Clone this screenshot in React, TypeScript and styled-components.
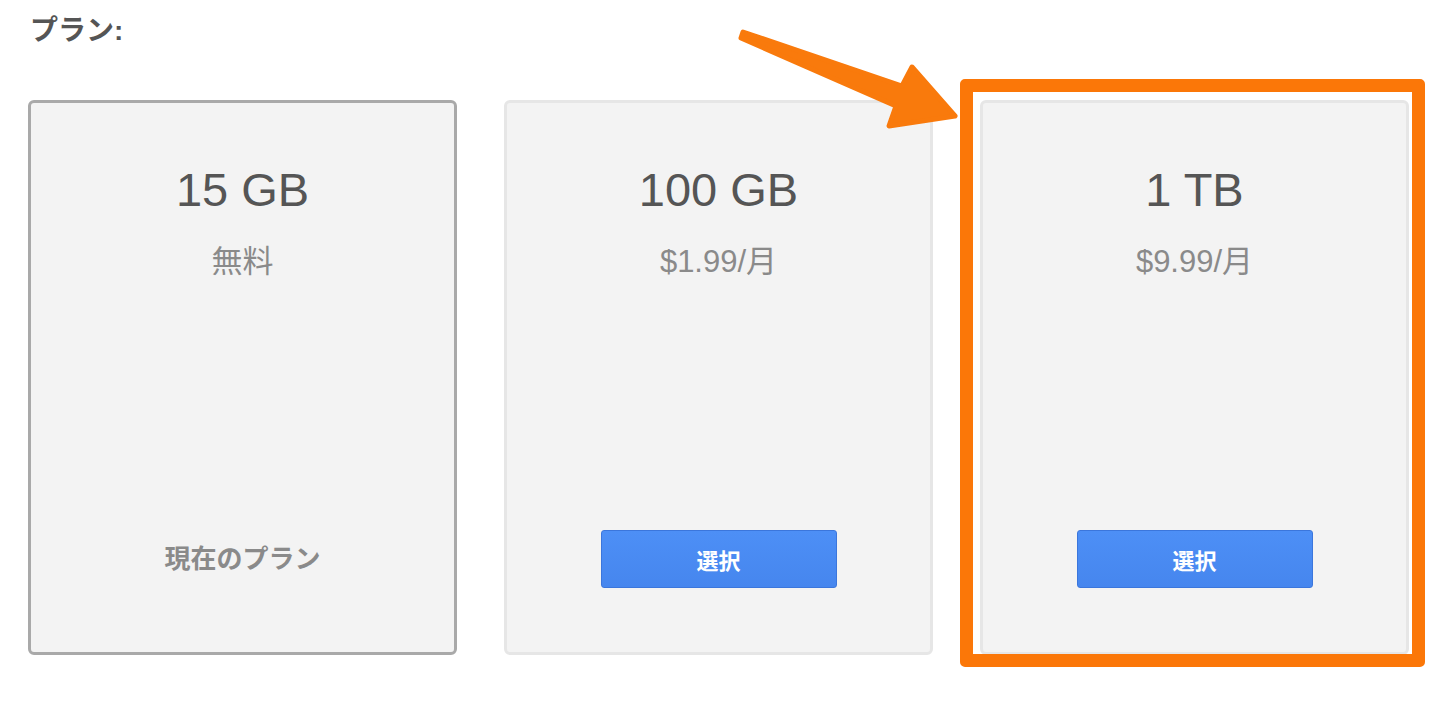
import styled, { createGlobalStyle } from "styled-components";

const GlobalStyle = createGlobalStyle`
    body {
        margin: 0;
        background: #ffffff;
        font-family: "Liberation Sans", "Noto Sans CJK JP", sans-serif;
    }
`;

const Page = styled.div`
    position: relative;
    width: 1442px;
    height: 704px;
    padding: 13px 0 0 28px;
    box-sizing: border-box;
`;
const Title = styled.h2`
    margin: 0 0 0 2px;
    font-size: 28px;
    line-height: 36px;
    font-weight: bold;
    color: #555555;
`;
const PlanRow = styled.div`
    display: flex;
    gap: 47px;
    margin-top: 51px;
`;
const Card = styled.div<{ $current?: boolean }>`
    position: relative;
    width: 429px;
    height: 555px;
    box-sizing: border-box;
    display: flex;
    flex-direction: column;
    align-items: center;
    padding: 59px 0 64px;
    background: #f3f3f3;
    border: 3px solid ${(props) => (props.$current ? "#a9a9a9" : "#e6e6e6")};
    border-radius: 6px;
`;
const Size = styled.div`
    font-size: 47px;
    line-height: 56px;
    color: #555555;
`;
const Price = styled.div`
    margin-top: 24px;
    font-size: 31px;
    line-height: 40px;
    color: #8a8a8a;
`;
const Current = styled.div`
    margin-top: auto;
    height: 58px;
    line-height: 58px;
    font-size: 26px;
    font-weight: bold;
    color: #8a8a8a;
`;
const SelectButton = styled.button`
    margin-top: auto;
    width: 236px;
    height: 58px;
    border: 1px solid #3b76dc;
    border-radius: 3px;
    background: linear-gradient(#4d8ff6, #4686ee);
    color: #ffffff;
    font-family: inherit;
    font-size: 22px;
    font-weight: bold;
    cursor: pointer;
`;
const Highlight = styled.div`
    position: absolute;
    top: -24px;
    left: -23px;
    right: -19px;
    bottom: -15px;
    border: 13px solid #fb7708;
    border-radius: 5px;
    pointer-events: none;
`;
const Arrow = styled.svg`
    position: absolute;
    left: 720px;
    top: 20px;
`;

interface IPlan {
    size: string;
    price: string;
    current?: boolean;
    highlighted?: boolean;
}

const plans: IPlan[] = [
    { size: "15 GB", price: "無料", current: true },
    { size: "100 GB", price: "$1.99/月" },
    { size: "1 TB", price: "$9.99/月", highlighted: true },
];

function App() {
    return (
        <>
            <GlobalStyle />
            <Page>
                <Title>プラン:</Title>
                <PlanRow>
                    {plans.map((plan) => (
                        <Card key={plan.size} $current={plan.current}>
                            <Size>{plan.size}</Size>
                            <Price>{plan.price}</Price>
                            {plan.current ? <Current>現在のプラン</Current> : <SelectButton>選択</SelectButton>}
                            {plan.highlighted && <Highlight />}
                        </Card>
                    ))}
                </PlanRow>
                <Arrow width="250" height="120" viewBox="0 0 250 120">
                    <polygon
                        points="23,12 182,66 192,47 235,96 169,106 176,86 21,18"
                        fill="#f97a0c"
                        stroke="#f97a0c"
                        strokeWidth="5"
                        strokeLinejoin="round"
                    />
                </Arrow>
            </Page>
        </>
    );
}
export default App;
